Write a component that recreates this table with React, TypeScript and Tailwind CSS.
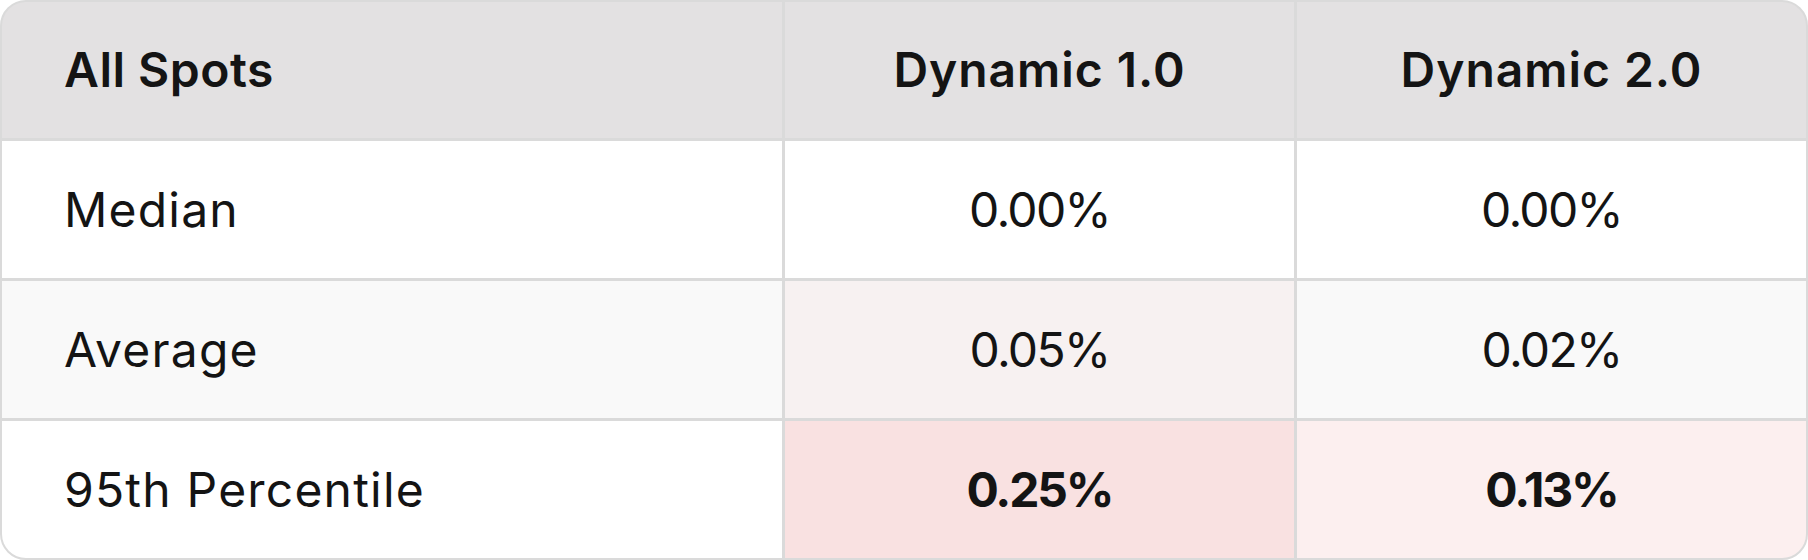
import React from "react";

const font = { fontFamily: 'Inter, "Open Sans", "Liberation Sans", sans-serif' };

export default function App() {
  const cellBase = "flex items-center text-[#141414]";
  const label = `${cellBase} pl-[62px] text-[48px] font-normal tracking-[0.025em]`;
  const num = `${cellBase} justify-center text-[48px] font-normal tracking-[-0.035em]`;
  const numBold = `${cellBase} justify-center text-[48px] font-bold tracking-[-0.045em]`;
  const head = `${cellBase} bg-[#e3e1e2] justify-center text-[48px] font-semibold tracking-[0.02em]`;
  return (
    <div className="w-[1808px] h-[560px] bg-white" style={font}>
      <div className="w-[1808px] h-[560px] border-2 border-[#dadada] rounded-[26px] overflow-hidden bg-[#dadada] grid grid-cols-[780px_509px_509px] grid-rows-[136px_137px_137px_137px] gap-[3px]">
        <div className={`${cellBase} bg-[#e3e1e2] pl-[62px] text-[48px] font-semibold tracking-[0.01em]`}>All Spots</div>
        <div className={head}>Dynamic 1.0</div>
        <div className={head}>Dynamic 2.0</div>

        <div className={`${label} bg-white`}>Median</div>
        <div className={`${num} bg-white`}>0.00%</div>
        <div className={`${num} bg-white`}>0.00%</div>

        <div className={`${label} bg-[#f9f9f9]`}>Average</div>
        <div className={`${num} bg-[#f7f1f1]`}>0.05%</div>
        <div className={`${num} bg-[#f9f9f9]`}>0.02%</div>

        <div className={`${label} bg-white`}>95th Percentile</div>
        <div className={`${numBold} bg-[#f9e1e1]`}>0.25%</div>
        <div className={`${numBold} bg-[#fcefef]`}>0.13%</div>
      </div>
    </div>
  );
}
